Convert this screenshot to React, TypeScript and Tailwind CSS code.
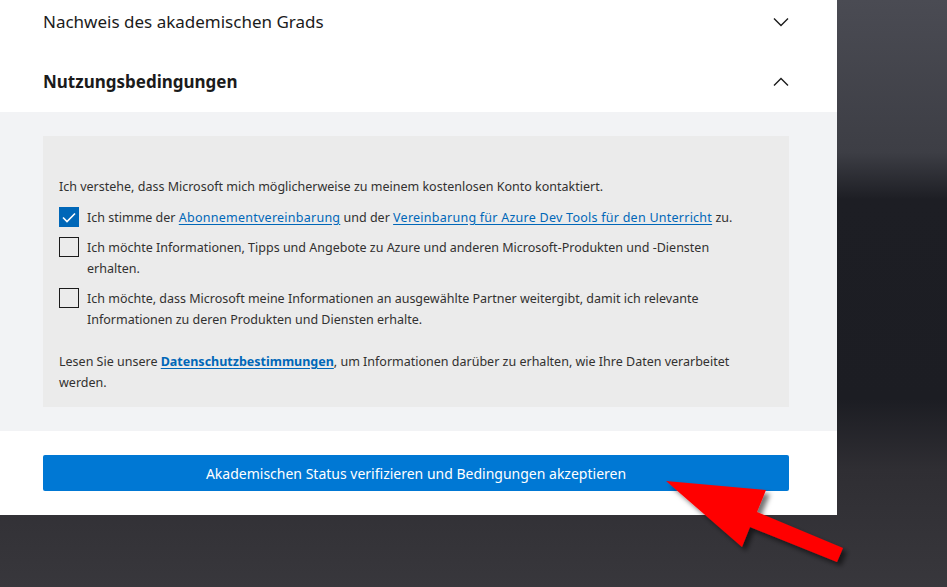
import React from 'react';

const FONT = { fontFamily: '"Noto Sans", "Open Sans", "Liberation Sans", sans-serif' };

function Chevron({ up }: { up?: boolean }) {
  return (
    <svg width="16" height="10" viewBox="0 0 16 10" fill="none" stroke="#1b1b1b" strokeWidth="1.4">
      {up ? <polyline points="1,8.5 8,1.5 15,8.5" /> : <polyline points="1,1.5 8,8.5 15,1.5" />}
    </svg>
  );
}

function Checkbox({ checked }: { checked?: boolean }) {
  if (checked) {
    return (
      <span className="flex h-[20px] w-[20px] shrink-0 items-center justify-center bg-[#0067b8]">
        <svg width="14" height="11" viewBox="0 0 14 11" fill="none" stroke="#fff" strokeWidth="1.6">
          <polyline points="1,5.5 5,9.5 13,1.5" />
        </svg>
      </span>
    );
  }
  return <span className="h-[20px] w-[20px] shrink-0 border border-[#1b1b1b] bg-transparent" />;
}

function Link({ children, bold }: { children: React.ReactNode; bold?: boolean }) {
  return (
    <a
      href="#"
      className={`text-[#0067b8] underline underline-offset-2 ${bold ? 'font-bold' : 'tracking-[0.25px]'}`}
    >
      {children}
    </a>
  );
}

const OPTIONS = [
  {
    checked: true,
    text: (
      <>
        Ich stimme der <Link>Abonnementvereinbarung</Link> und der{' '}
        <Link>Vereinbarung für Azure Dev Tools für den Unterricht</Link> zu.
      </>
    ),
  },
  {
    checked: false,
    text: 'Ich möchte Informationen, Tipps und Angebote zu Azure und anderen Microsoft-Produkten und -Diensten erhalten.',
  },
  {
    checked: false,
    text: 'Ich möchte, dass Microsoft meine Informationen an ausgewählte Partner weitergibt, damit ich relevante Informationen zu deren Produkten und Diensten erhalte.',
  },
];

export default function App() {
  return (
    <div
      className="relative h-[587px] w-[947px] overflow-hidden bg-[linear-gradient(180deg,#4a4b53_0%,#3d3e45_26%,#1d1e24_34%,#1c1d23_68%,#2f2e33_80%,#38373c_100%)]"
      style={FONT}
    >
      <div className="flex w-[837px] flex-col overflow-hidden bg-white text-[#323130]">
        <div className="-mt-[8px] flex flex-col">
          <div className="flex h-[60px] items-center justify-between pl-[43px] pr-[48px]">
            <span className="text-[17px] text-[#1b1b1b]">Nachweis des akademischen Grads</span>
            <Chevron />
          </div>
          <div className="flex h-[60px] items-center justify-between pl-[43px] pr-[48px]">
            <span className="text-[17px] font-bold text-[#1b1b1b]">Nutzungsbedingungen</span>
            <Chevron up />
          </div>
        </div>

        <div className="bg-[#f2f3f5] px-[43px] pb-[24px] pt-[24px]">
          <div className="flex w-[746px] flex-col bg-[#ebebeb] pb-[14px] pl-[16px] pr-[20px] pt-[40px] text-[12.5px] leading-[21px]">
            <p>Ich verstehe, dass Microsoft mich möglicherweise zu meinem kostenlosen Konto kontaktiert.</p>
            <div className="mt-[10px] flex flex-col gap-[9px]">
              {OPTIONS.map((o, i) => (
                <div key={i} className="flex items-start gap-[8px]">
                  <Checkbox checked={o.checked} />
                  <p className="pr-[20px]">{o.text}</p>
                </div>
              ))}
            </div>
            <p className="mt-[21px]">
              Lesen Sie unsere <Link bold>Datenschutzbestimmungen</Link>, um Informationen darüber zu erhalten, wie Ihre
              Daten verarbeitet werden.
            </p>
          </div>
        </div>

        <div className="px-[43px] pb-[24px] pt-[24px]">
          <button
            type="button"
            className="flex h-[36px] w-[746px] items-center justify-center rounded-[2px] bg-[#0078d4] text-[14px] text-white"
          >
            Akademischen Status verifizieren und Bedingungen akzeptieren
          </button>
        </div>
      </div>

      <svg className="pointer-events-none absolute left-0 top-0" width="947" height="587" viewBox="0 0 947 587">
        <defs>
          <filter id="shadow" x="-20%" y="-20%" width="140%" height="140%">
            <feDropShadow dx="4" dy="4" stdDeviation="2.5" floodColor="#000" floodOpacity="0.55" />
          </filter>
        </defs>
        <polygon
          points="666,481 766,490 757,512 843,548 837,562 750,527 742,547"
          fill="#ff0000"
          filter="url(#shadow)"
        />
      </svg>
    </div>
  );
}
